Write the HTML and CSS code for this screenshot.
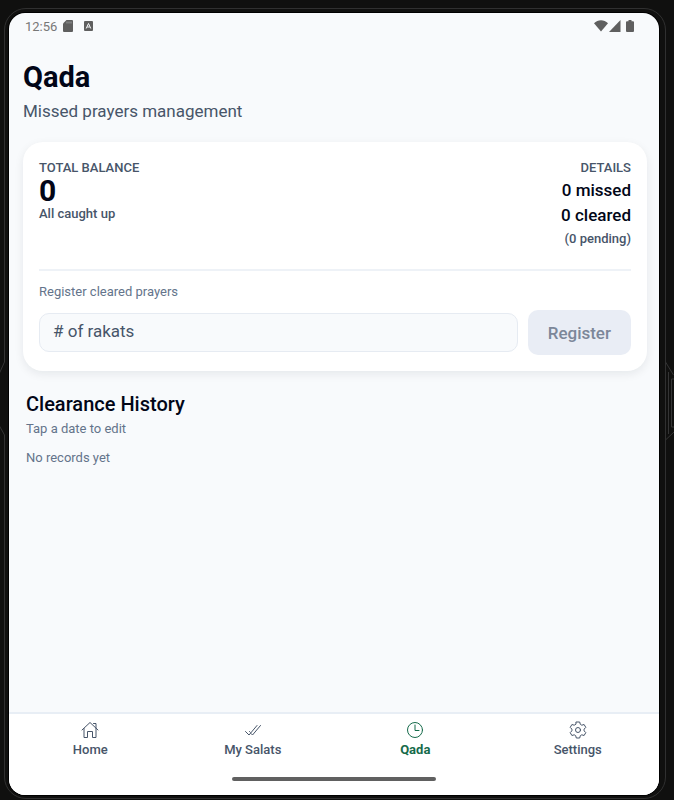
FILE: index.html
```html
<!DOCTYPE html>
<html lang="en">
<head>
    <meta charset="utf-8">
    <meta name="viewport" content="width=device-width, initial-scale=1">
    <title>Qada</title>
    <link rel="stylesheet" href="styles.css">
</head>
<body>
    <div class="device">
        <!-- Hinge on both sides of the case -->
        <svg class="hinge hinge-left" viewBox="0 0 8 90" aria-hidden="true">
            <path d="M4.500 0v12l-5 11M-.5 76l5 9v5" />
        </svg>
        <svg class="hinge hinge-right" viewBox="0 0 8 90" aria-hidden="true">
            <path d="M-.5 0v12l8 13M8 82L-.5 90M8 29H5.500v48H8M2.500 22v62" />
        </svg>

        <div class="screen">
            <!-- Status bar -->
            <div class="statusbar">
                <span class="time">12:56</span>
                <svg class="sd" width="10" height="12" viewBox="0 0 10 12" aria-hidden="true">
                    <path d="M3.500 0H9a1 1 0 0 1 1 1v10a1 1 0 0 1-1 1H1a1 1 0 0 1-1-1V3.500z" />
                    <path class="cut" d="M4 1.500v2M6 1.500v2M8 1.500v2" />
                </svg>
                <svg class="app" width="9" height="10" viewBox="0 0 9 10" aria-hidden="true">
                    <rect width="9" height="10" rx="1" />
                    <path class="cut" d="M2.200 7.500L4.500 2.500L6.800 7.500M3.200 6h2.600" />
                </svg>
                <span class="signals">
                    <svg width="14" height="12" viewBox="0 0 14 12" aria-hidden="true">
                        <path d="M0 3.200C4-.8 10-.8 14 3.200L7 11.500z" />
                    </svg>
                    <svg width="12" height="12" viewBox="0 0 12 12" aria-hidden="true">
                        <path d="M11.500 0v12H0z" />
                    </svg>
                    <svg class="battery" width="8" height="12" viewBox="0 0 8 12" aria-hidden="true">
                        <path d="M2.500 0h3v1.200H7a1 1 0 0 1 1 1V11a1 1 0 0 1-1 1H1a1 1 0 0 1-1-1V2.200a1 1 0 0 1 1-1h1.500z" />
                    </svg>
                </span>
            </div>

            <main class="content">
                <h1>Qada</h1>
                <p class="subtitle">Missed prayers management</p>

                <!-- Balance card -->
                <section class="card">
                    <div class="summary">
                        <div class="balance">
                            <div class="label">TOTAL BALANCE</div>
                            <div class="total">0</div>
                            <div class="note">All caught up</div>
                        </div>
                        <div class="details">
                            <div class="label">DETAILS</div>
                            <div class="count">0 missed</div>
                            <div class="count">0 cleared</div>
                            <div class="pending">(0 pending)</div>
                        </div>
                    </div>
                    <form class="register">
                        <label for="rakats">Register cleared prayers</label>
                        <div class="row">
                            <input type="text" id="rakats" inputmode="numeric" placeholder="# of rakats">
                            <button type="submit" disabled>Register</button>
                        </div>
                    </form>
                </section>

                <!-- History -->
                <section class="history">
                    <h2>Clearance History</h2>
                    <p>Tap a date to edit</p>
                    <p class="empty">No records yet</p>
                </section>
            </main>

            <!-- Bottom tabs -->
            <nav class="tabs">
                <a href="#home">
                    <svg width="18" height="18" viewBox="0 0 18 18" aria-hidden="true">
                        <path d="M1 9l8-7.500L17 9M3 7.500V16.500h3.500v-6h5v6H15V7.500M12.500 2.500H15v4.500" />
                    </svg>
                    Home
                </a>
                <a href="#salats">
                    <svg width="18" height="18" viewBox="0 0 18 18" aria-hidden="true">
                        <path d="M1.500 10.500l3.500 3.500 8-9.500M7 12.500L8.500 14l8-9.500M5.500 10.500l.8.8" />
                    </svg>
                    My Salats
                </a>
                <a href="#qada" class="active" aria-current="page">
                    <svg width="18" height="18" viewBox="0 0 18 18" aria-hidden="true">
                        <circle cx="9" cy="9" r="7.500" />
                        <path d="M9 4v5.500h4" />
                    </svg>
                    Qada
                </a>
                <a href="#settings">
                    <svg width="18" height="18" viewBox="0 0 18 18" aria-hidden="true">
                        <path d="M7.300 1h3.400l.6 2.300 1.500.9 2.300-.7 1.700 2.900-1.700 1.700v1.800l1.700 1.700-1.700 2.900-2.300-.7-1.500.9-.6 2.300H7.300l-.6-2.300-1.500-.9-2.300.7-1.700-2.900 1.700-1.700V8.100L1.200 6.400l1.700-2.900 2.300.7 1.500-.9z" />
                        <circle cx="9" cy="9" r="2.500" />
                    </svg>
                    Settings
                </a>
            </nav>
            <div class="homebar"></div>
        </div>
    </div>
</body>
</html>
```
FILE: styles.css
```css
* {
    box-sizing: border-box;
}

body {
    margin: 0;
    background: #10100f;
    font-family: Roboto, sans-serif;
    color: #475569;
}

h1, h2, p {
    margin: 0;
}

/* Phone case */
.device {
    position: relative;
    display: flex;
    min-height: 100vh;
    padding: 13px 15px 5px 9px;
}

.device::before {
    content: "";
    position: absolute;
    inset: 8px 8px 1px 4px;
    border: 1px solid #303030;
    border-radius: 22px;
}

.hinge {
    position: absolute;
    top: 350px;
    width: 8px;
    height: 90px;
    background: #10100f;
    fill: none;
    stroke: #353535;
}

.hinge-left {
    left: 0;
}

.hinge-right {
    right: 0;
}

.screen {
    position: relative;
    flex: 1;
    display: flex;
    flex-direction: column;
    background: #f8fafc;
    border-radius: 16px;
    box-shadow: 0 0 0 1px #000;
    overflow: hidden;
}

/* Status bar */
.statusbar {
    display: flex;
    align-items: center;
    height: 26px;
    padding: 0 25px 0 16px;
    font-size: 13px;
    color: #777;
}

.statusbar svg {
    fill: #5f5f5f;
}

.statusbar .cut {
    fill: none;
    stroke: #f8fafc;
}

.sd {
    margin-left: 6px;
}

.sd .cut {
    opacity: 0.4;
}

.app {
    margin-left: 11px;
}

.signals {
    display: flex;
    gap: 1px;
    margin-left: auto;
}

.battery {
    margin-left: 4px;
}

/* Page content */
.content {
    flex: 1;
    padding: 20px 12px 20px 14px;
}

h1 {
    font-size: 29px;
    line-height: 36px;
    font-weight: 700;
    color: #020617;
}

.subtitle {
    margin-top: 4px;
    font-size: 17px;
    line-height: 24px;
}

.card {
    margin-top: 19px;
    padding: 15px 16px 16px;
    background: #fff;
    border-radius: 20px;
    box-shadow: 0 3px 10px rgba(15, 23, 42, 0.08);
    font-size: 13px;
    line-height: 20px;
}

.summary {
    display: flex;
    justify-content: space-between;
    padding-bottom: 19px;
    border-bottom: 2px solid #eef2f7;
}

.label {
    line-height: 21px;
    font-weight: 500;
}

.total {
    font-size: 30px;
    line-height: 26px;
    font-weight: 700;
    color: #020617;
}

.note,
.pending {
    font-weight: 500;
}

.details {
    text-align: right;
}

.count {
    font-size: 17px;
    line-height: 25px;
    font-weight: 500;
    color: #020617;
}

.pending {
    line-height: 22px;
}

/* Register form */
.register {
    padding-top: 11px;
}

.register label {
    display: block;
    color: #64748b;
}

.row {
    display: flex;
    align-items: center;
    gap: 10px;
    margin-top: 8px;
}

.row input {
    flex: 1;
    min-width: 0;
    height: 39px;
    padding: 0 13px 4px;
    border: 1px solid #e6ebf2;
    border-radius: 10px;
    background: #f8fafc;
    font-family: inherit;
    font-size: 17px;
    color: #020617;
}

.row input::placeholder {
    color: #475569;
    opacity: 1;
}

.row button {
    height: 45px;
    padding: 0 20px;
    border: none;
    border-radius: 10px;
    background: #e9edf5;
    font-family: inherit;
    font-size: 17px;
    font-weight: 500;
    color: #7c8799;
}

/* History */
.history {
    margin-top: 21px;
    padding: 0 3px;
    font-size: 13px;
    line-height: 20px;
    color: #64748b;
}

h2 {
    margin-bottom: 3px;
    font-size: 20px;
    line-height: 24px;
    font-weight: 500;
    color: #020617;
}

.empty {
    margin-top: 9px;
}

/* Bottom tabs */
.tabs {
    display: flex;
    height: 83px;
    padding-top: 7px;
    border-top: 2px solid #e8eef5;
    background: #fff;
}

.tabs a {
    flex: 1;
    display: flex;
    flex-direction: column;
    align-items: center;
    gap: 1px;
    font-size: 13px;
    line-height: 20px;
    font-weight: 500;
    color: #475569;
    text-decoration: none;
}

.tabs svg {
    fill: none;
    stroke: currentColor;
    stroke-linejoin: round;
    stroke-linecap: round;
}

.tabs .active {
    font-weight: 700;
    color: #166b4b;
}

.homebar {
    position: absolute;
    bottom: 14px;
    left: 50%;
    width: 204px;
    height: 4px;
    margin-left: -102px;
    border-radius: 2px;
    background: #606060;
}
```
